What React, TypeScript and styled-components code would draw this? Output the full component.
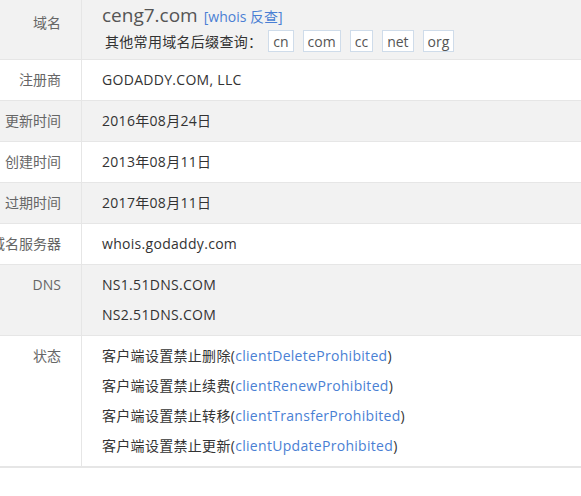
import React from "react";
import styled, { createGlobalStyle } from "styled-components";

const GlobalStyle = createGlobalStyle`
  html, body { margin: 0; padding: 0; background: #fff; }
  body {
    font-family: "Open Sans", "Noto Sans CJK SC", sans-serif;
    font-size: 14px;
    color: #333;
    overflow: hidden;
  }
`;

const Table = styled.div`
  width: 100%;
  border-bottom: 2px solid #e6e6e6;
`;

const Row = styled.div<{ $grey?: boolean }>`
  display: grid;
  grid-template-columns: 82px 1fr;
  background: ${(p) => (p.$grey ? "#f2f2f2" : "#fff")};
  border-top: 1px solid #e6e6e6;
  &:first-child { border-top: none; }
`;

const Label = styled.div<{ $top?: number }>`
  display: flex;
  justify-content: flex-end;
  white-space: nowrap;
  padding: ${(p) => p.$top ?? 5}px 20px 5px 0;
  line-height: 30px;
  color: #666;
  border-right: 1px solid #e6e6e6;
  min-width: 0;
`;

const Value = styled.div`
  padding: 5px 0 5px 20px;
  display: flex;
  flex-direction: column;
`;

const Line = styled.div`
  line-height: 30px;
  white-space: nowrap;
  color: #333;
  letter-spacing: 0.3px;
`;

const TitleValue = styled.div`
  padding: 2px 0 5px 20px;
  display: flex;
  flex-direction: column;
`;

const TitleLine = styled.div`
  display: flex;
  align-items: baseline;
  gap: 6px;
  height: 26px;
  line-height: 26px;
`;

const Domain = styled.span`
  font-size: 19px;
  color: #555;
`;

const Link = styled.a`
  color: #4a7fd4;
  text-decoration: none;
`;

const SuffixLine = styled.div`
  display: flex;
  align-items: center;
  gap: 9px;
  height: 26px;
  margin-left: 3px;
`;

const SuffixLabel = styled.span`
  color: #333;
  letter-spacing: 0.3px;
  margin-right: -3px;
`;

const Suffix = styled.span`
  display: inline-flex;
  align-items: center;
  height: 20px;
  padding: 0 4px;
  border: 1px solid #cfdcea;
  background: #fff;
  color: #555;
`;

const statuses = [
  ["删除", "clientDeleteProhibited"],
  ["续费", "clientRenewProhibited"],
  ["转移", "clientTransferProhibited"],
  ["更新", "clientUpdateProhibited"],
];

export default function App() {
  return (
    <>
      <GlobalStyle />
      <Table>
        <Row $grey>
          <Label $top={8}>域名</Label>
          <TitleValue>
            <TitleLine>
              <Domain>ceng7.com</Domain>
              <Link href="#">[whois 反查]</Link>
            </TitleLine>
            <SuffixLine>
              <SuffixLabel>其他常用域名后缀查询：</SuffixLabel>
              {["cn", "com", "cc", "net", "org"].map((s) => (
                <Suffix key={s}>{s}</Suffix>
              ))}
            </SuffixLine>
          </TitleValue>
        </Row>
        <Row>
          <Label>注册商</Label>
          <Value><Line>GODADDY.COM, LLC</Line></Value>
        </Row>
        <Row $grey>
          <Label>更新时间</Label>
          <Value><Line>2016年08月24日</Line></Value>
        </Row>
        <Row>
          <Label>创建时间</Label>
          <Value><Line>2013年08月11日</Line></Value>
        </Row>
        <Row $grey>
          <Label>过期时间</Label>
          <Value><Line>2017年08月11日</Line></Value>
        </Row>
        <Row>
          <Label>域名服务器</Label>
          <Value><Line>whois.godaddy.com</Line></Value>
        </Row>
        <Row $grey>
          <Label>DNS</Label>
          <Value>
            <Line>NS1.51DNS.COM</Line>
            <Line>NS2.51DNS.COM</Line>
          </Value>
        </Row>
        <Row>
          <Label>状态</Label>
          <Value>
            {statuses.map(([cn, en]) => (
              <Line key={en}>
                客户端设置禁止{cn}(<Link href="#">{en}</Link>)
              </Line>
            ))}
          </Value>
        </Row>
      </Table>
    </>
  );
}
